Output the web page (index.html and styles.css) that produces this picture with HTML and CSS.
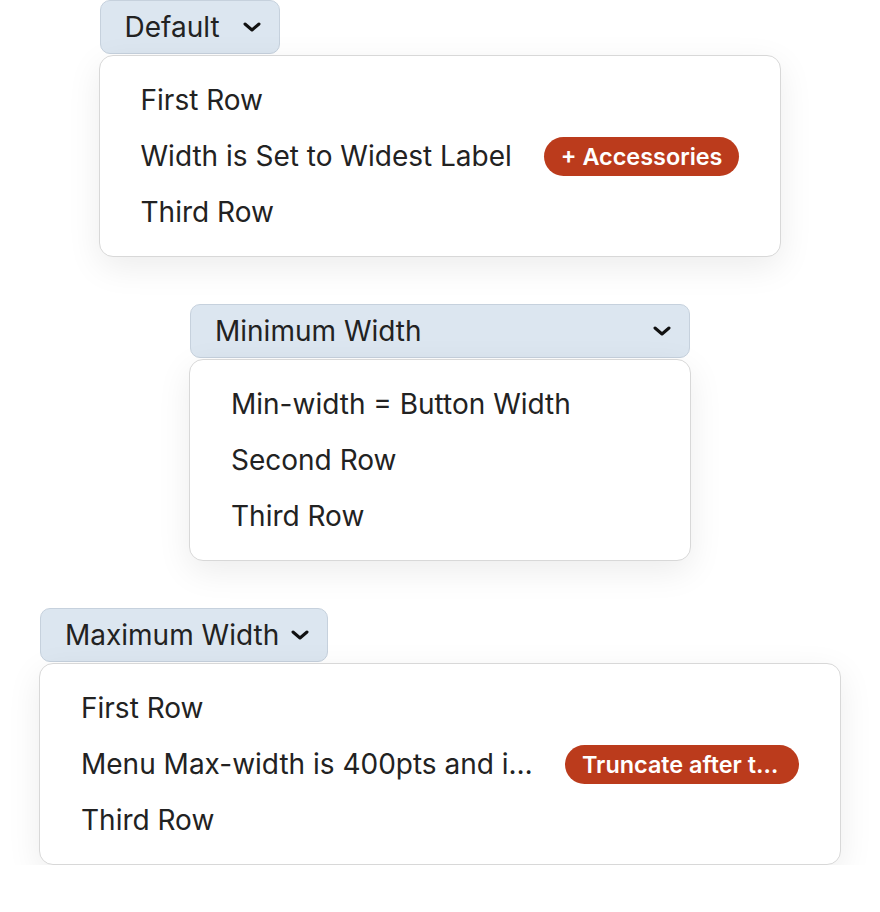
FILE: index.html
```html
<!DOCTYPE html>
<html>

<head>
	<title>Menu widths</title>
	<link rel="stylesheet" href="styles.css">
</head>

<body>
	<div class="stack">
		<div class="dropdown">
			<button class="trigger trigger-default">
				<span class="trigger-label">Default</span>
				<svg class="chevron" viewBox="0 0 18 10"><path d="M2 2l7 6 7-6"/></svg>
			</button>
			<div class="menu">
				<div class="row"><span class="label">First Row</span></div>
				<div class="row"><span class="label">Width is Set to Widest Label</span><span class="badge">+ Accessories</span></div>
				<div class="row"><span class="label">Third Row</span></div>
			</div>
		</div>

		<div class="dropdown">
			<button class="trigger trigger-min">
				<span class="trigger-label">Minimum Width</span>
				<svg class="chevron" viewBox="0 0 18 10"><path d="M2 2l7 6 7-6"/></svg>
			</button>
			<div class="menu menu-min">
				<div class="row"><span class="label">Min-width = Button Width</span></div>
				<div class="row"><span class="label">Second Row</span></div>
				<div class="row"><span class="label">Third Row</span></div>
			</div>
		</div>

		<div class="dropdown">
			<button class="trigger">
				<span class="trigger-label">Maximum Width</span>
				<svg class="chevron" viewBox="0 0 18 10"><path d="M2 2l7 6 7-6"/></svg>
			</button>
			<div class="menu">
				<div class="row"><span class="label">First Row</span></div>
				<div class="row"><span class="label label-max">Menu Max-width is 400pts and it truncates the label</span><span class="badge badge-max">Truncate after the max width</span></div>
				<div class="row"><span class="label">Third Row</span></div>
			</div>
		</div>
	</div>
</body>

</html>
```
FILE: styles.css
```css
body {
	margin: 0;
	font-family: Inter, "Noto Sans", sans-serif;
	color: #222;
	background-color: #fff;
}

.stack {
	display: flex;
	flex-direction: column;
	align-items: center;
	gap: 47px;
}

.dropdown {
	display: flex;
	flex-direction: column;
	align-items: flex-start;
}

.trigger {
	display: flex;
	align-items: center;
	justify-content: space-between;
	gap: 12px;
	height: 54px;
	margin-left: 1px;
	padding: 0 18px 0 24px;
	font-family: inherit;
	font-size: 28px;
	color: #222;
	background-color: #dce6f0;
	border: 1px solid #c6d1dd;
	border-radius: 10px;
}

.trigger-default {
	min-width: 180px;
}

.trigger-min {
	width: 500px;
}

.chevron {
	width: 18px;
	height: 10px;
	fill: none;
	stroke: #111;
	stroke-width: 3;
	stroke-linecap: round;
	stroke-linejoin: round;
}

.menu {
	box-sizing: border-box;
	margin-top: 1px;
	padding: 16px 41px;
	background-color: #fff;
	border: 1px solid #d8d8d8;
	border-radius: 14px;
	box-shadow: 0 10px 34px rgba(0, 0, 0, 0.08);
}

.menu-min {
	min-width: 502px;
}

.row {
	display: flex;
	align-items: center;
	gap: 32px;
	height: 56px;
	font-size: 28px;
}

.label {
	white-space: nowrap;
}

.label-max {
	max-width: 452px;
	overflow: hidden;
	text-overflow: ellipsis;
}

.badge {
	box-sizing: border-box;
	padding: 0 17px;
	height: 39px;
	line-height: 39px;
	font-size: 23.4px;
	font-weight: 600;
	color: #fff;
	background-color: #bb3b1c;
	border-radius: 20px;
	white-space: nowrap;
}

.badge-max {
	max-width: 234px;
	padding-right: 15px;
	overflow: hidden;
	text-overflow: ellipsis;
}
```
